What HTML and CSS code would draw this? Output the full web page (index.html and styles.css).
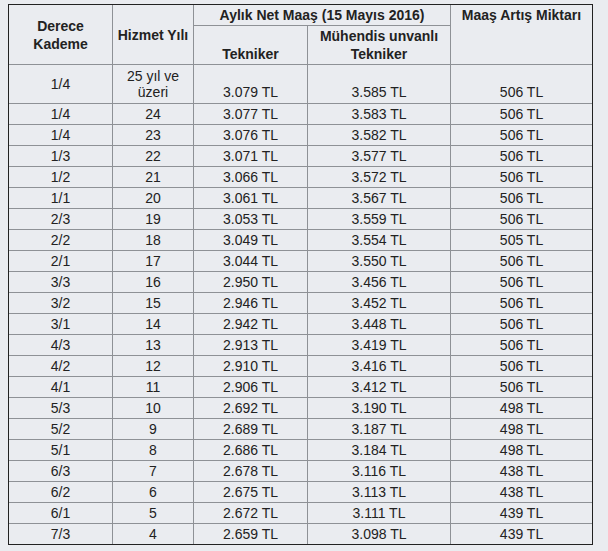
FILE: index.html
```html
<!DOCTYPE html>
<html lang="tr">
<head>
<meta charset="utf-8">
<title>Maaş Tablosu</title>
<link rel="stylesheet" href="styles.css">
</head>
<body>
<table class="salary">
  <colgroup>
    <col class="c1"><col class="c2"><col class="c3"><col class="c4"><col class="c5">
  </colgroup>
  <thead>
    <tr>
      <th rowspan="2" class="first mid">Derece<br>Kademe</th>
      <th rowspan="2" class="mid">Hizmet Yılı</th>
      <th colspan="2">Aylık Net Maaş (15 Mayıs 2016)</th>
      <th rowspan="2" class="top">Maaş Artış Miktarı</th>
    </tr>
    <tr class="tall">
      <th class="bottom">Tekniker</th>
      <th>Mühendis unvanlı<br>Tekniker</th>
    </tr>
  </thead>
  <tbody>
    <tr class="tall"><td class="mid">1/4</td><td class="top">25 yıl ve<br>üzeri</td><td class="bottom">3.079 TL</td><td class="bottom">3.585 TL</td><td class="bottom">506 TL</td></tr>
    <tr><td>1/4</td><td>24</td><td>3.077 TL</td><td>3.583 TL</td><td>506 TL</td></tr>
    <tr><td>1/4</td><td>23</td><td>3.076 TL</td><td>3.582 TL</td><td>506 TL</td></tr>
    <tr><td>1/3</td><td>22</td><td>3.071 TL</td><td>3.577 TL</td><td>506 TL</td></tr>
    <tr><td>1/2</td><td>21</td><td>3.066 TL</td><td>3.572 TL</td><td>506 TL</td></tr>
    <tr><td>1/1</td><td>20</td><td>3.061 TL</td><td>3.567 TL</td><td>506 TL</td></tr>
    <tr><td>2/3</td><td>19</td><td>3.053 TL</td><td>3.559 TL</td><td>506 TL</td></tr>
    <tr><td>2/2</td><td>18</td><td>3.049 TL</td><td>3.554 TL</td><td>505 TL</td></tr>
    <tr><td>2/1</td><td>17</td><td>3.044 TL</td><td>3.550 TL</td><td>506 TL</td></tr>
    <tr><td>3/3</td><td>16</td><td>2.950 TL</td><td>3.456 TL</td><td>506 TL</td></tr>
    <tr><td>3/2</td><td>15</td><td>2.946 TL</td><td>3.452 TL</td><td>506 TL</td></tr>
    <tr><td>3/1</td><td>14</td><td>2.942 TL</td><td>3.448 TL</td><td>506 TL</td></tr>
    <tr><td>4/3</td><td>13</td><td>2.913 TL</td><td>3.419 TL</td><td>506 TL</td></tr>
    <tr><td>4/2</td><td>12</td><td>2.910 TL</td><td>3.416 TL</td><td>506 TL</td></tr>
    <tr><td>4/1</td><td>11</td><td>2.906 TL</td><td>3.412 TL</td><td>506 TL</td></tr>
    <tr><td>5/3</td><td>10</td><td>2.692 TL</td><td>3.190 TL</td><td>498 TL</td></tr>
    <tr><td>5/2</td><td>9</td><td>2.689 TL</td><td>3.187 TL</td><td>498 TL</td></tr>
    <tr><td>5/1</td><td>8</td><td>2.686 TL</td><td>3.184 TL</td><td>498 TL</td></tr>
    <tr><td>6/3</td><td>7</td><td>2.678 TL</td><td>3.116 TL</td><td>438 TL</td></tr>
    <tr><td>6/2</td><td>6</td><td>2.675 TL</td><td>3.113 TL</td><td>438 TL</td></tr>
    <tr><td>6/1</td><td>5</td><td>2.672 TL</td><td>3.111 TL</td><td>439 TL</td></tr>
    <tr><td>7/3</td><td>4</td><td>2.659 TL</td><td>3.098 TL</td><td>439 TL</td></tr>
  </tbody>
</table>
</body>
</html>
```

FILE: styles.css
```css
html, body {
  background: #eaecf0;
}
body {
  margin: 4px 0 0 8px;
  font-family: "Liberation Sans", Arial, sans-serif;
  font-size: 14px;
  line-height: 16px;
  color: #222;
}
.salary {
  border-collapse: separate;
  border-spacing: 0;
  border: 1px solid #222;
  width: 585px;
  table-layout: fixed;
  background: #eaecf0;
}
.c1 { width: 103px; }
.c2 { width: 81px; }
.c3 { width: 114px; }
.c4 { width: 143px; }
.c5 { width: 142px; }

.salary th,
.salary td {
  border-left: 1px solid #8e9196;
  border-top: 1px solid #8e9196;
  padding: 2px 4px;
  text-align: center;
  vertical-align: middle;
}
.salary th {
  font-weight: bold;
  line-height: 18px;
  padding-top: 1px;
  padding-bottom: 1px;
}
.salary td { font-weight: normal; }

.salary thead tr:first-child th { border-top: none; }
.salary th.first,
.salary tbody td:first-child { border-left: none; }

.salary .tall td {
  padding-top: 3px;
  padding-bottom: 3px;
}
.salary .mid { vertical-align: middle; }
.salary .top { vertical-align: top; }
.salary .bottom { vertical-align: bottom; }
```
